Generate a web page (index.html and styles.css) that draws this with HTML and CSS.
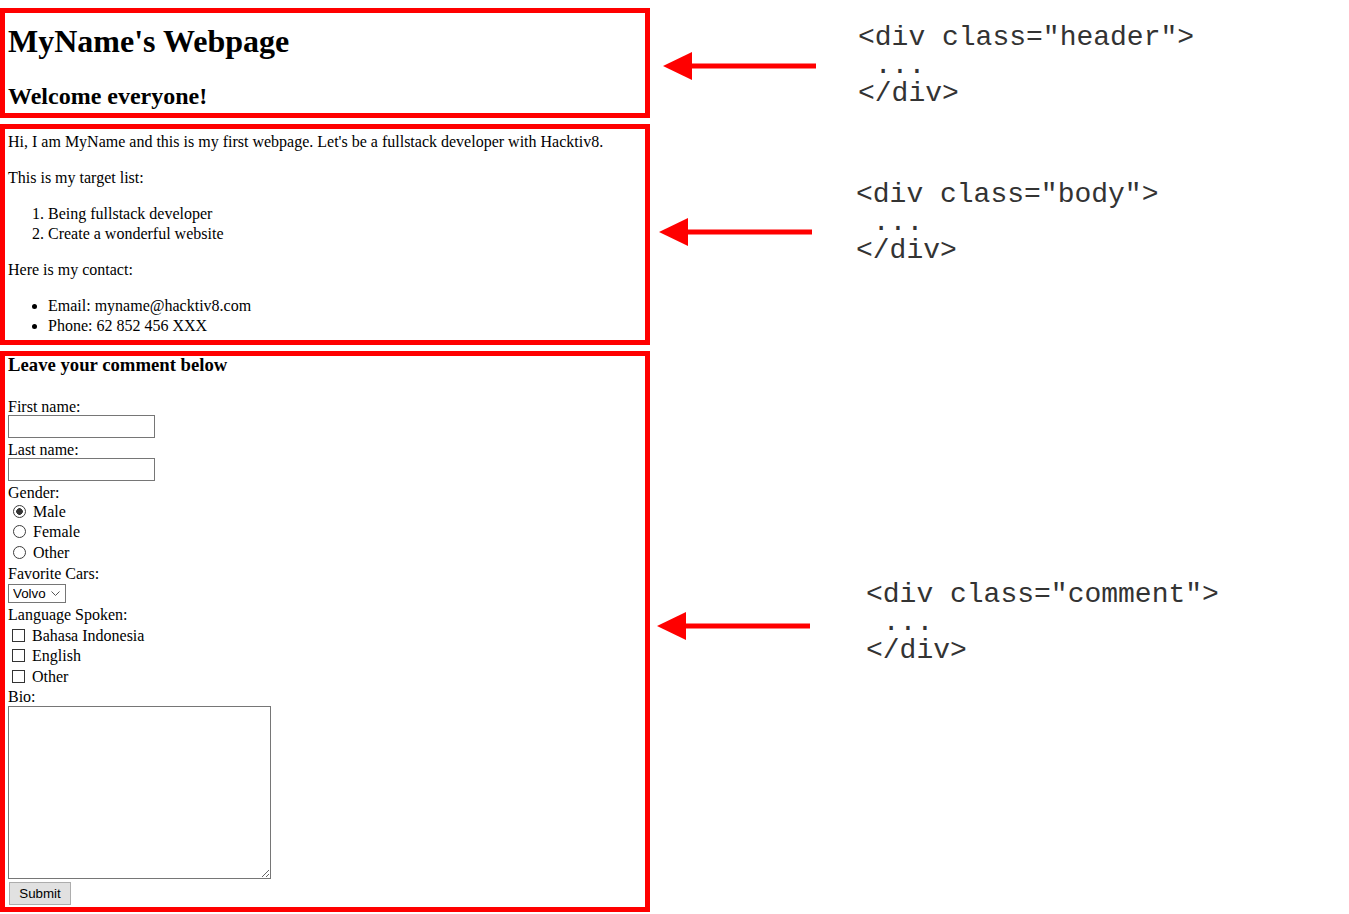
FILE: index.html
```html
<!DOCTYPE html>
<html lang="en">
<head>
<meta charset="utf-8">
<title>MyName's Webpage</title>
<link rel="stylesheet" href="styles.css">
</head>
<body>
<main class="layout">
  <div class="box header">
    <h1 class="title">MyName's Webpage</h1>
    <h2 class="subtitle">Welcome everyone!</h2>
  </div>
  <div class="note note-header">
    <svg class="arrow" width="153" height="28" viewBox="0 0 153 28" aria-hidden="true">
      <polygon points="0,14 29,0 29,28" fill="#ff0000"/>
      <rect x="27" y="11.5" width="126" height="5" fill="#ff0000"/>
    </svg>
    <pre class="code">&lt;div class="header"&gt;
 ...
&lt;/div&gt;</pre>
  </div>

  <div class="box body">
    <p class="text">Hi, I am MyName and this is my first webpage. Let's be a fullstack developer with Hacktiv8.</p>
    <p class="text">This is my target list:</p>
    <ol class="list">
      <li>Being fullstack developer</li>
      <li>Create a wonderful website</li>
    </ol>
    <p class="text">Here is my contact:</p>
    <ul class="list list-last">
      <li>Email: myname@hacktiv8.com</li>
      <li>Phone: 62 852 456 XXX</li>
    </ul>
  </div>
  <div class="note note-body">
    <svg class="arrow" width="153" height="28" viewBox="0 0 153 28" aria-hidden="true">
      <polygon points="0,14 29,0 29,28" fill="#ff0000"/>
      <rect x="27" y="11.5" width="126" height="5" fill="#ff0000"/>
    </svg>
    <pre class="code">&lt;div class="body"&gt;
 ...
&lt;/div&gt;</pre>
  </div>

  <div class="box comment">
    <h3 class="form-title">Leave your comment below</h3>
    <form class="form" onsubmit="return false;">
      <label class="field-label" for="fname">First name:</label>
      <input class="text-input" type="text" id="fname">
      <label class="field-label" for="lname">Last name:</label>
      <input class="text-input" type="text" id="lname">
      <span class="field-label">Gender:</span>
      <label class="choice"><input class="radio" type="radio" name="gender" checked> Male</label>
      <label class="choice"><input class="radio" type="radio" name="gender"> Female</label>
      <label class="choice"><input class="radio" type="radio" name="gender"> Other</label>
      <label class="field-label" for="cars">Favorite Cars:</label>
      <span class="select-wrap">
        <select class="select" id="cars">
          <option>Volvo</option>
          <option>Saab</option>
          <option>Fiat</option>
          <option>Audi</option>
        </select>
        <svg class="chevron" width="9" height="5" viewBox="0 0 9 5" aria-hidden="true">
          <path d="M0.5 0.5 L4.5 4.5 L8.5 0.5" fill="none" stroke="#555" stroke-width="1"/>
        </svg>
      </span>
      <span class="field-label">Language Spoken:</span>
      <label class="choice choice-check"><input class="check" type="checkbox"> Bahasa Indonesia</label>
      <label class="choice choice-check"><input class="check" type="checkbox"> English</label>
      <label class="choice choice-check"><input class="check" type="checkbox"> Other</label>
      <label class="field-label field-label-bio" for="bio">Bio:</label>
      <textarea class="bio" id="bio"></textarea>
      <button class="submit" type="submit">Submit</button>
    </form>
  </div>
  <div class="note note-comment">
    <svg class="arrow" width="153" height="28" viewBox="0 0 153 28" aria-hidden="true">
      <polygon points="0,14 29,0 29,28" fill="#ff0000"/>
      <rect x="27" y="11.5" width="126" height="5" fill="#ff0000"/>
    </svg>
    <pre class="code">&lt;div class="comment"&gt;
 ...
&lt;/div&gt;</pre>
  </div>
</main>
</body>
</html>
```

FILE: styles.css
```css
* {
  box-sizing: border-box;
}

html, body {
  margin: 0;
  padding: 0;
  background: #ffffff;
}

body {
  padding-top: 8px;
  font-family: "Liberation Serif", "Times New Roman", serif;
  font-size: 16px;
  line-height: 20px;
  color: #000;
}

.layout {
  display: grid;
  grid-template-columns: 650px 1fr;
  row-gap: 6px;
}

.box {
  border: 5px solid #ff0000;
  padding: 0 3px;
}

/* header */
.header {
  height: 110px;
}

.title {
  font-size: 32px;
  line-height: 37px;
  font-weight: bold;
  margin: 10px 0 0;
}

.subtitle {
  font-size: 24px;
  line-height: 28px;
  font-weight: bold;
  margin: 22px 0 0;
}

/* body */
.body {
  height: 221px;
  padding-top: 3px;
}

.text {
  margin: 0 0 16px;
}

.list {
  margin: 0 0 16px;
  padding-left: 40px;
}

.list-last {
  margin-bottom: 0;
}

/* comment */
.comment {
  height: 561px;
}

.form-title {
  font-size: 18.72px;
  line-height: 18px;
  font-weight: bold;
  margin: 0 0 21px;
}

.form {
  margin: 0;
}

.field-label {
  display: block;
  height: 20px;
  padding-top: 2px;
}

.field-label-bio {
  padding-top: 3px;
}

.choice {
  display: block;
  height: 20.33px;
  padding-top: 1px;
}

.choice-check {
  height: 20.5px;
  padding-top: 3px;
}

.text-input {
  display: block;
  width: 147px;
  height: 23px;
  margin: 0;
  padding: 1px 2px;
  border: 1px solid #767676;
  font-family: "Liberation Sans", Arial, sans-serif;
  font-size: 13.33px;
  background: #fff;
}

.radio {
  -webkit-appearance: none;
  appearance: none;
  width: 13px;
  height: 13px;
  margin: 3px 3px 0 5px;
  border: 1px solid #3c3c3c;
  border-radius: 50%;
  background: #fff;
  vertical-align: -1px;
}

.radio:checked {
  background: radial-gradient(circle, #333 0, #333 3px, #fff 3.6px);
}

.check {
  -webkit-appearance: none;
  appearance: none;
  width: 13px;
  height: 13px;
  margin: 3px 3px 0 4px;
  border: 1px solid #333;
  border-radius: 0;
  background: #fff;
  vertical-align: -1px;
}

.select-wrap {
  display: block;
  position: relative;
  width: 58px;
  margin-top: 2px;
}

.select {
  -webkit-appearance: none;
  appearance: none;
  display: block;
  width: 58px;
  height: 19px;
  margin: 0;
  padding: 0 0 0 4px;
  border: 1px solid #767676;
  border-radius: 0;
  background: #fff;
  color: #000;
  font-family: "Liberation Sans", Arial, sans-serif;
  font-size: 13.33px;
  line-height: 17px;
}

.chevron {
  position: absolute;
  right: 6px;
  top: 7px;
  pointer-events: none;
}

.bio {
  display: block;
  width: 263px;
  height: 173px;
  margin: 1.5px 0 0;
  border: 1px solid #767676;
  border-radius: 0;
  padding: 2px;
  font-family: "Liberation Mono", monospace;
  font-size: 13.33px;
}

.submit {
  display: block;
  width: 62px;
  height: 23px;
  margin: 3px 0 0 1px;
  padding: 0;
  background: #e1e1e1;
  border: 1px solid #adadad;
  border-radius: 0;
  color: #000;
  font-family: "Liberation Sans", Arial, sans-serif;
  font-size: 13.33px;
}

/* annotations */
.note {
  display: flex;
  align-items: flex-start;
}

.arrow {
  display: block;
  flex: none;
}

.code {
  margin: 0;
  font-family: "Liberation Mono", "Courier New", monospace;
  font-size: 28px;
  line-height: 28px;
  color: #333;
  white-space: pre;
}

.note-header .arrow {
  margin: 44px 0 0 13px;
}

.note-header .code {
  margin: 16px 0 0 42px;
}

.note-body .arrow {
  margin: 94px 0 0 9px;
}

.note-body .code {
  margin: 57px 0 0 44px;
}

.note-comment .arrow {
  margin: 261px 0 0 7px;
}

.note-comment .code {
  margin: 230px 0 0 56px;
}
```
